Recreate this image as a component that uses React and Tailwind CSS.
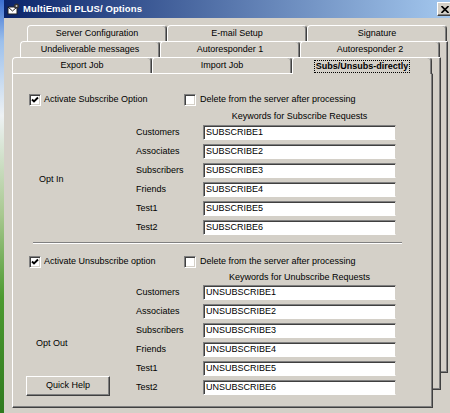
import React from "react";

const sub = ["SUBSCRIBE1", "SUBSCRIBE2", "SUBSCRIBE3", "SUBSCRIBE4", "SUBSCRIBE5", "SUBSCRIBE6"];
const unsub = ["UNSUBSCRIBE1", "UNSUBSCRIBE2", "UNSUBSCRIBE3", "UNSUBSCRIBE4", "UNSUBSCRIBE5", "UNSUBSCRIBE6"];
const names = ["Customers", "Associates", "Subscribers", "Friends", "Test1", "Test2"];

const Check = ({ checked }) => (
	<span className="w-[12px] h-[12px] shrink-0 bg-white border border-t-[#808080] border-l-[#808080] border-b-white border-r-white shadow-[inset_1px_1px_0_#404040,inset_-1px_-1px_0_#D4D0C8] flex items-center justify-center">
		{checked && (
			<svg width="8" height="8" viewBox="0 0 8 8">
				<path d="M1 3.5 L3 5.5 L7 1.5" stroke="#000" strokeWidth="1.9" fill="none" />
			</svg>
		)}
	</span>
);

const Tab = ({ label, selected }) => (
	<div
		className={
			selected
				? "w-[140px] h-[17px] -mb-[1px] relative z-10 bg-[#D4D0C8] border-l border-t border-white border-r border-r-[#404040] rounded-t-[4px] shadow-[inset_-1px_0_0_#808080] flex items-center justify-center"
				: "w-[140px] h-[16px] bg-[#D4D0C8] border-l border-t border-white border-r border-r-[#404040] rounded-t-[4px] shadow-[inset_-1px_0_0_#808080] flex items-center justify-center"
		}
	>
		{selected ? (
			<span className="font-bold border border-dotted border-black px-[1px] leading-[11px]">{label}</span>
		) : (
			<span>{label}</span>
		)}
	</div>
);

const Section = ({ checkLabel, keywords, words, side, kwMt, inMt, bottom }) => (
	<div>
		<div className="flex items-center h-[13px]">
			<div className="w-[155px] flex items-center gap-[3px]">
				<Check checked />
				<span>{checkLabel}</span>
			</div>
			<div className="flex items-center gap-[4px]">
				<Check />
				<span>Delete from the server after processing</span>
			</div>
		</div>
		<div className={`${kwMt} ml-[174px] w-[193px] h-[12px] leading-[12px] text-center`}>{keywords}</div>
		<div className={`${inMt} flex`}>
			{bottom ? (
				<div className="w-[107px] flex flex-col">
					<span className="mt-[52px] pl-[7px] leading-[13px]">{side}</span>
					<button className="mt-[26px] -ml-[3px] w-[84px] h-[20px] bg-[#D4D0C8] border border-t-white border-l-white border-b-[#404040] border-r-[#404040] shadow-[inset_-1px_-1px_0_#808080] text-[9px]">
						Quick Help
					</button>
				</div>
			) : (
				<div className="w-[107px] flex items-center pl-[10px]">{side}</div>
			)}
			<div className="w-[67px] flex flex-col gap-[4px]">
				{names.map((n) => (
					<span key={n} className="h-[15px] leading-[15px]">
						{n}
					</span>
				))}
			</div>
			<div className="w-[193px] flex flex-col gap-[4px]">
				{words.map((w) => (
					<div
						key={w}
						className="h-[15px] bg-white border border-t-[#808080] border-l-[#808080] border-b-white border-r-[#D4D0C8] shadow-[inset_1px_1px_0_#404040] pl-[2px] leading-[13px]"
					>
						{w}
					</div>
				))}
			</div>
		</div>
	</div>
);

const Panel = ({ h, children }) => (
	<div
		className={`${h} w-[421px] bg-[#D4D0C8] border border-t-white border-l-white border-b-[#404040] border-r-[#404040] shadow-[inset_-1px_-1px_0_#808080]`}
	>
		{children}
	</div>
);

export default function App() {
	return (
		<div className="w-[450px] h-[413px] overflow-hidden bg-[linear-gradient(180deg,#3b6fd0_0%,#9cc0ec_10%,#eef2f4_28%,#a8c890_52%,#4c9a30_72%,#2f7a1f_100%)] font-['Liberation_Sans',Arial,sans-serif] text-[9px] text-black">
			<div className="ml-[4px] w-[452px] h-[420px] bg-[#D4D0C8] flex flex-col">
				{/* title bar */}
				<div className="h-[18px] bg-[linear-gradient(90deg,#0A246A,#A6CAF0)] flex items-center justify-between pl-[3px] pr-[3px]">
					<div className="flex items-center gap-[3px]">
						<svg width="13" height="12" viewBox="0 0 13 12">
							<rect x="1" y="4" width="9" height="7" fill="#fff" stroke="#222" strokeWidth="1" />
							<path d="M1 4 L5.5 8 L10 4" stroke="#222" fill="none" />
							<circle cx="9.5" cy="3" r="2.6" fill="#333" />
							<circle cx="9.5" cy="3" r="1" fill="#ccc" />
						</svg>
						<span className="text-white font-bold text-[9.5px] tracking-[0.1px]">MultiEmail PLUS/ Options</span>
					</div>
					<div className="w-[16px] h-[14px] bg-[#D4D0C8] border border-t-white border-l-white border-b-[#404040] border-r-[#404040] shadow-[inset_-1px_-1px_0_#808080] flex items-center justify-center">
						<svg width="8" height="7" viewBox="0 0 8 7">
							<path d="M0.5 0 L7.5 7 M7.5 0 L0.5 7" stroke="#000" strokeWidth="1.6" />
						</svg>
					</div>
				</div>

				{/* stacked tab pages */}
				<div className="mt-[7px] grid">
					<div className="col-start-1 row-start-1 ml-[23px]">
						<div className="flex">
							<Tab label="Server Configuration" />
							<Tab label="E-mail Setup" />
							<Tab label="Signature" />
						</div>
						<Panel h="h-[332px]" />
					</div>
					<div className="col-start-1 row-start-1 ml-[16px] mt-[16px]">
						<div className="flex">
							<Tab label="Undeliverable messages" />
							<Tab label="Autoresponder 1" />
							<Tab label="Autoresponder 2" />
						</div>
						<Panel h="h-[333px]" />
					</div>
					<div className="col-start-1 row-start-1 ml-[8px] mt-[32px]">
						<div className="flex items-end">
							<Tab label="Export Job" />
							<Tab label="Import Job" />
							<Tab label="Subs/Unsubs-directly" selected />
						</div>
						<Panel h="h-[335px]">
							<div className="pt-[19px] pl-[16px]">
								<Section
									checkLabel="Activate Subscribe Option"
									keywords="Keywords for Subscribe Requests"
									words={sub}
									side="Opt In"
									kwMt="mt-[4px]"
									inMt="mt-[3px]"
								/>
								<div className="mt-[7px] ml-[4px] w-[369px] h-[2px] border-t border-t-[#808080] border-b border-b-white" />
								<div className="mt-[11px]">
									<Section
										checkLabel="Activate Unsubscribe option"
										keywords="Keywords for Unubscribe Requests"
										words={unsub}
										side="Opt Out"
										kwMt="mt-[3px]"
										inMt="mt-[2px]"
										bottom
									/>
								</div>
							</div>
						</Panel>
					</div>
				</div>
			</div>
		</div>
	);
}
